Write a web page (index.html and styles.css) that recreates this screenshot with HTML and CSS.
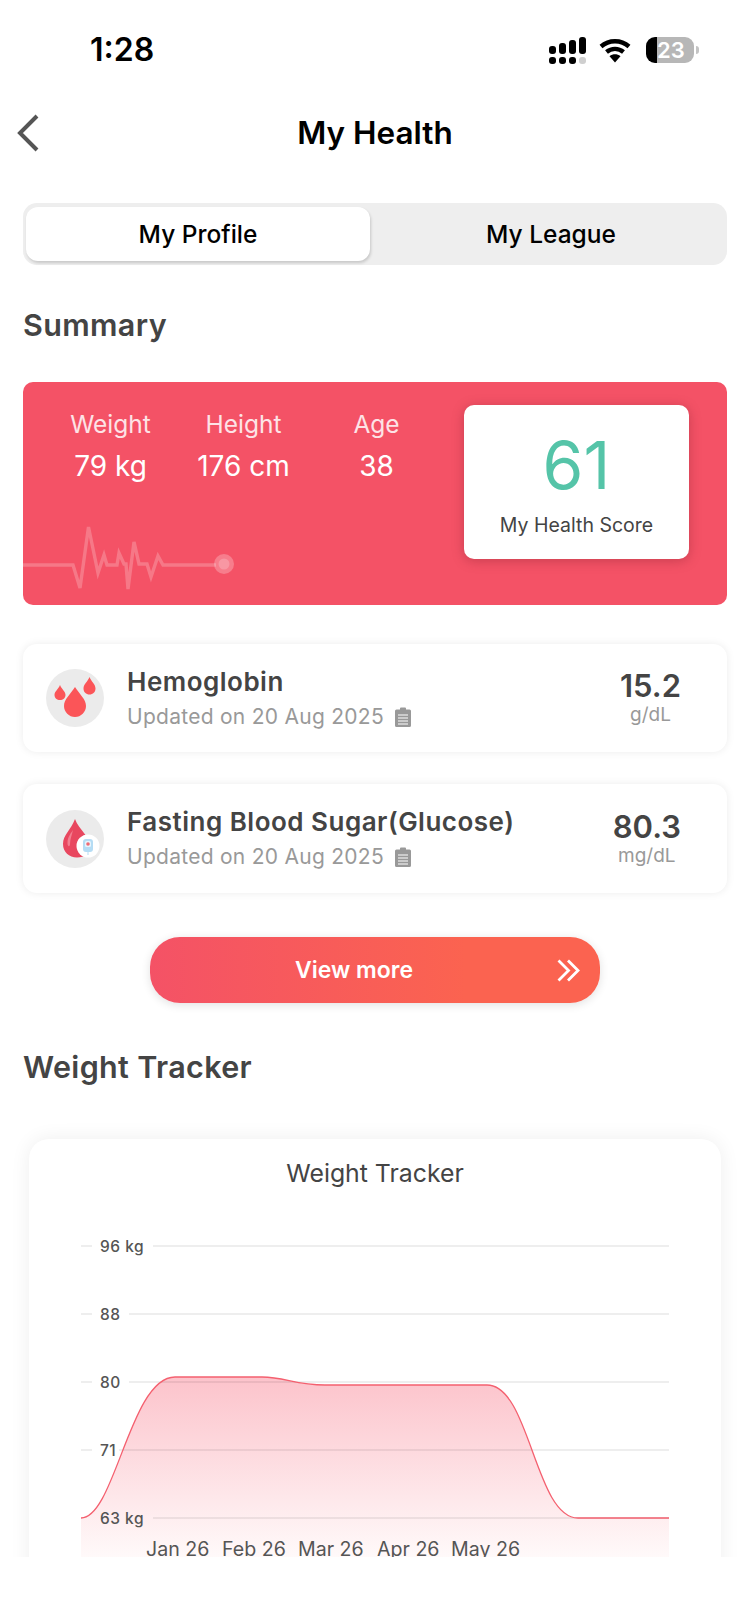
FILE: index.html
```html
<!DOCTYPE html>
<html>
  <head>
    <title>My Health</title>
    <meta charset="UTF-8" />
    <meta name="viewport" content="width=device-width, initial-scale=1" />
    <link rel="stylesheet" href="styles.css">
  </head>
  <body>
    <div class="page">
      <div class="status-bar">
        <div class="time">1:28</div>
        <div class="status-icons">
          <svg class="signal" width="38" height="28" viewBox="0 0 38 28">
            <rect x="0" y="9" width="7" height="8" rx="3"/>
            <rect x="10" y="6" width="7" height="11" rx="3"/>
            <rect x="20" y="3" width="7" height="14" rx="3"/>
            <rect x="30" y="0" width="7" height="17" rx="3"/>
            <rect x="0" y="20" width="7" height="7" rx="3"/>
            <rect x="10" y="20" width="7" height="7" rx="3"/>
            <rect x="20" y="20" width="7" height="7" rx="3"/>
            <rect x="30" y="20" width="7" height="7" rx="3" fill="#cfcfcf"/>
          </svg>
          <svg class="wifi" width="32" height="25" viewBox="0 0 32 25">
            <path d="M2 8.5C10 1.5 22 1.5 30 8.5" fill="none" stroke="#000" stroke-width="4.4"/>
            <path d="M7.5 14C12.5 9.8 19.5 9.8 24.5 14" fill="none" stroke="#000" stroke-width="4.4"/>
            <path d="M10.5 18.2C14 15.6 18 15.6 21.5 18.2L16 24.5Z"/>
          </svg>
          <div class="battery"><span>23</span></div>
          <div class="battery-nub"></div>
        </div>
      </div>

      <div class="nav">
        <svg class="back" width="24" height="38" viewBox="0 0 24 38">
          <path d="M21 2L4 19L21 36" fill="none" stroke="#555" stroke-width="4"/>
        </svg>
        <h1>My Health</h1>
      </div>

      <main>
        <div class="tabs">
          <div class="tab active">My Profile</div>
          <div class="tab">My League</div>
        </div>

        <h2 class="summary-title">Summary</h2>

        <div class="summary-card">
          <div class="stats">
            <div class="stat"><div class="stat-label">Weight</div><div class="stat-value">79 kg</div></div>
            <div class="stat"><div class="stat-label">Height</div><div class="stat-value">176 cm</div></div>
            <div class="stat"><div class="stat-label">Age</div><div class="stat-value">38</div></div>
          </div>
          <div class="score-box">
            <div class="score">61</div>
            <div class="score-label">My Health Score</div>
          </div>
          <svg class="ecg" width="220" height="80" viewBox="23 515 220 80">
            <path d="M23 565H73L80 588L88.5 527L98 573L104 555L107 565H117L119 553L124 564H126L128 589L134 542L139 564H147L151 577L158 556L163 565H216" fill="none" stroke="#fff" stroke-opacity="0.22" stroke-width="3.4"/>
            <circle cx="224" cy="564" r="10" fill="#fff" fill-opacity="0.25"/>
            <circle cx="224" cy="564" r="5.5" fill="#fff" fill-opacity="0.2"/>
          </svg>
        </div>

        <div class="lab-row first">
          <div class="lab-icon">
            <svg width="58" height="58" viewBox="46 669 58 58">
              <path d="M75 687C80 695 86 699 86 706C86 712 81 717 75 717C69 717 64 712 64 706C64 699 70 695 75 687Z" fill="#fb5558"/>
              <path d="M60 685C62 690 65.500 691 65.500 695C65.500 698 63 700 60 700C57 700 54.500 698 54.500 695C54.500 691 58 690 60 685Z" fill="#fb5558"/>
              <path d="M89.500 677C91.500 682 95.500 684 95.500 688.500C95.500 692 93 694.500 89.500 694.500C86 694.500 83.500 692 83.500 688.500C83.500 684 87.500 682 89.500 677Z" fill="#fb5558"/>
            </svg>
          </div>
          <div class="lab-text">
            <div class="lab-name">Hemoglobin</div>
            <div class="lab-date">
              Updated on 20 Aug 2025
              <svg class="clip" width="16" height="20" viewBox="0 0 16 20">
                <path d="M1.500 2.500H5V1.500Q5 0.500 6 0.500H10Q11 0.500 11 1.500V2.500H14.500Q16 2.500 16 4V18.500Q16 20 14.500 20H1.500Q0 20 0 18.500V4Q0 2.500 1.500 2.500Z" fill="#999"/>
                <path d="M3 8H13M3 11H13M3 14H13M3 17H13" stroke="#fff" stroke-width="1"/>
              </svg>
            </div>
          </div>
          <div class="lab-result">
            <div class="lab-value">15.2</div>
            <div class="lab-unit">g/dL</div>
          </div>
        </div>

        <div class="lab-row">
          <div class="lab-icon">
            <svg width="58" height="58" viewBox="46 810 58 58">
              <path d="M75 819C79 830 90 836 90 846C90 853 85 857.500 77 857.500C69 857.500 63 852 63 844C63 835 71 830 75 819Z" fill="#e8475f"/>
              <path d="M67.500 843C67.500 837 71 833 73 830C72 835 70 839 70 844C70 847 67.500 847 67.500 843Z" fill="#f27f90"/>
              <circle cx="88" cy="846" r="11.500" fill="#fff"/>
              <rect x="83" y="839" width="10" height="13" rx="3" fill="#b5dcf4"/>
              <rect x="85" y="841" width="6" height="6" rx="1.500" fill="#e6f4fc"/>
              <circle cx="88" cy="844" r="1.800" fill="#ef6a73"/>
              <rect x="87.500" y="852" width="1" height="3" fill="#b5dcf4"/>
            </svg>
          </div>
          <div class="lab-text">
            <div class="lab-name">Fasting Blood Sugar(Glucose)</div>
            <div class="lab-date">
              Updated on 20 Aug 2025
              <svg class="clip" width="16" height="20" viewBox="0 0 16 20">
                <path d="M1.500 2.500H5V1.500Q5 0.500 6 0.500H10Q11 0.500 11 1.500V2.500H14.500Q16 2.500 16 4V18.500Q16 20 14.500 20H1.500Q0 20 0 18.500V4Q0 2.500 1.500 2.500Z" fill="#999"/>
                <path d="M3 8H13M3 11H13M3 14H13M3 17H13" stroke="#fff" stroke-width="1"/>
              </svg>
            </div>
          </div>
          <div class="lab-result">
            <div class="lab-value">80.3</div>
            <div class="lab-unit">mg/dL</div>
          </div>
        </div>

        <div class="view-more">
          <span>View more</span>
          <svg class="chevrons" width="23" height="23" viewBox="0 0 23 23">
            <path d="M1.500 1.500L11.500 11.500L1.500 21.500M11 1.500L21 11.500L11 21.500" fill="none" stroke="#fff" stroke-width="2.800"/>
          </svg>
        </div>

        <h2 class="tracker-title">Weight Tracker</h2>

        <div class="chart-card">
          <div class="chart-title">Weight Tracker</div>
          <!-- viewBox uses the same numbers as the page so the points are easy to read off -->
          <svg class="chart" width="692" height="340" viewBox="29 1220 692 340">
            <defs>
              <linearGradient id="areaFill" gradientUnits="userSpaceOnUse" x1="0" y1="1377" x2="0" y2="1562">
                <stop offset="0" stop-color="#fcc3cb"/>
                <stop offset="1" stop-color="#fffbfb"/>
              </linearGradient>
            </defs>

            <path d="M81 1518C115 1518 130 1377 175 1377L262 1377C285 1377 295 1385 325 1385L487 1385C530 1385 535 1518 578 1518L669 1518V1560H81Z" fill="url(#areaFill)"/>

            <g class="grid">
              <path d="M81 1246H92M153 1246H669"/>
              <path d="M81 1314H92M129 1314H669"/>
              <path d="M81 1382H92M129 1382H669"/>
              <path d="M81 1450H92M119 1450H669"/>
              <path d="M153 1518H669"/>
            </g>

            <path d="M81 1518C115 1518 130 1377 175 1377L262 1377C285 1377 295 1385 325 1385L487 1385C530 1385 535 1518 578 1518L669 1518" fill="none" stroke="#f4606f" stroke-width="1.300"/>

            <g class="y-labels">
              <text x="100" y="1252">96 kg</text>
              <text x="100" y="1320">88</text>
              <text x="100" y="1388">80</text>
              <text x="100" y="1456">71</text>
              <text x="100" y="1524">63 kg</text>
            </g>
            <g class="x-labels">
              <text x="146" y="1556">Jan 26</text>
              <text x="222" y="1556">Feb 26</text>
              <text x="298" y="1556">Mar 26</text>
              <text x="377" y="1556">Apr 26</text>
              <text x="451" y="1556">May 26</text>
            </g>
          </svg>
        </div>
      </main>
    </div>
  </body>
</html>
```

FILE: styles.css
```css
html,
body {
  margin: 0;
  padding: 0;
  background-color: #ffffff;
  font-family: Inter, "Liberation Sans", sans-serif;
}

/* the capture stops the page content above the bottom of the window */
.page {
  height: 1557px;
  overflow: hidden;
}

/* status bar */
.status-bar {
  height: 100px;
  display: flex;
  justify-content: space-between;
  box-sizing: border-box;
  padding: 30px 51px 0 90px;
}
.time {
  font-size: 32px;
  line-height: 40px;
  font-weight: 600;
  color: #000;
}
.status-icons {
  display: flex;
  align-items: flex-start;
  padding-top: 7px;
}
.wifi {
  margin-left: 12px;
  margin-top: 1px;
}
.battery {
  width: 48px;
  height: 26px;
  margin-left: 15px;
  box-sizing: border-box;
  padding: 0 10px 0 11px;
  border-radius: 9px;
  background: linear-gradient(90deg, #000 0, #000 11px, #b7b7b7 11px);
  color: #fff;
  font-size: 22px;
  line-height: 26px;
  font-weight: 600;
  text-align: center;
}
.battery-nub {
  width: 3px;
  height: 8px;
  margin: 9px 0 0 2px;
  border-radius: 0 3px 3px 0;
  background-color: #c4c4c4;
}

/* nav */
.nav {
  height: 66px;
  display: flex;
  align-items: center;
  justify-content: center;
  position: relative;
}
.nav h1 {
  margin: -2px 0 0;
  font-size: 31.500px;
  font-weight: 600;
  color: #000;
}
.back {
  position: absolute;
  left: 16px;
  top: 14px;
}

main {
  padding: 0 23px;
}

/* tabs */
.tabs {
  display: flex;
  height: 62px;
  margin-top: 37px;
  box-sizing: border-box;
  padding: 4px 3px;
  border-radius: 14px;
  background-color: #eeeeee;
}
.tab {
  flex: 1;
  display: flex;
  align-items: center;
  justify-content: center;
  padding-left: 8px;
  font-size: 24.500px;
  font-weight: 500;
  color: #000;
  border-radius: 12px;
}
.tab.active {
  flex: 0 0 344px;
  padding-left: 0;
  background-color: #fff;
  box-shadow: 1px 2px 3px rgba(0, 0, 0, 0.16);
}

h2 {
  margin: 0;
  font-size: 30.500px;
  line-height: 40px;
  font-weight: 600;
  letter-spacing: 0.35px;
  color: #444;
}
.summary-title {
  margin-top: 40px;
}
.tracker-title {
  margin-top: 44px;
}

/* red summary card */
.summary-card {
  display: flex;
  position: relative;
  height: 223px;
  margin-top: 37px;
  box-sizing: border-box;
  padding: 26px 36px 0 21px;
  border-radius: 10px;
  background-color: #f45266;
}
.stats {
  display: flex;
  width: 399px;
  margin-right: 21px;
  color: #fff;
  text-align: center;
}
.stat {
  flex: 1;
}
.stat-label {
  font-size: 24.500px;
  line-height: 32px;
  color: #fde3e6;
}
.stat-value {
  margin-top: 10px;
  font-size: 28px;
  line-height: 32px;
}
.score-box {
  width: 225px;
  height: 154px;
  margin-top: -3px;
  border-radius: 10px;
  background-color: #fff;
  text-align: center;
  box-shadow: 0 2px 12px rgba(120, 30, 40, 0.35);
}
.score {
  margin-top: 27px;
  font-size: 66px;
  line-height: 66px;
  color: #55c4a8;
}
.score-label {
  margin-top: 14px;
  font-size: 19.500px;
  line-height: 26px;
  color: #444;
}
.ecg {
  position: absolute;
  left: 0;
  bottom: 10px;
}

/* lab result rows */
.lab-row {
  display: flex;
  align-items: center;
  height: 109px;
  margin-top: 32px;
  box-sizing: border-box;
  padding: 0 46px 0 23px;
  border-radius: 14px;
  background-color: #fff;
  box-shadow: 0 0 8px rgba(0, 0, 0, 0.08);
}
.lab-row.first {
  height: 108px;
  margin-top: 39px;
}
.lab-icon {
  width: 58px;
  height: 58px;
  border-radius: 50%;
  background-color: #ebebeb;
}
.lab-icon svg {
  display: block;
}
.lab-text {
  flex: 1;
  margin-left: 23px;
}
.lab-name {
  font-size: 26px;
  line-height: 32px;
  font-weight: 600;
  letter-spacing: 0.5px;
  color: #444;
}
.lab-date {
  display: flex;
  align-items: center;
  margin-top: 5px;
  font-size: 21px;
  line-height: 28px;
  letter-spacing: 0.27px;
  color: #999;
}
.clip {
  margin-left: 11px;
}
.lab-result {
  display: flex;
  flex-direction: column;
  align-items: center;
}
.lab-value {
  font-size: 31px;
  line-height: 34px;
  font-weight: 600;
  color: #444;
}
.lab-unit {
  font-size: 19px;
  line-height: 24px;
  color: #999;
}

/* button */
.view-more {
  display: flex;
  align-items: center;
  justify-content: center;
  position: relative;
  width: 450px;
  height: 66px;
  margin: 44px auto 0;
  box-sizing: border-box;
  padding-right: 42px;
  border-radius: 30px;
  background: linear-gradient(90deg, #f45266, #fb6350 70%);
  color: #fff;
  font-size: 23px;
  font-weight: 600;
  box-shadow: 0 2px 10px rgba(0, 0, 0, 0.12);
}
.chevrons {
  position: absolute;
  right: 20px;
  top: 22px;
}

/* chart */
.chart-card {
  width: 692px;
  height: 480px;
  margin: 52px 0 0 6px;
  border-radius: 20px;
  background-color: #fff;
  box-shadow: 0 0 20px rgba(0, 0, 0, 0.07);
}
.chart-title {
  height: 81px;
  padding-top: 18px;
  box-sizing: border-box;
  text-align: center;
  font-size: 24.800px;
  line-height: 32px;
  color: #444;
}
.chart {
  display: block;
}
.grid path {
  fill: none;
  stroke: rgba(0, 0, 0, 0.09);
  stroke-width: 1.500;
}
.y-labels text {
  font-size: 15.500px;
  font-weight: 500;
  letter-spacing: 0.5px;
  fill: #555;
}
.x-labels text {
  font-size: 19.600px;
  fill: #555;
}
```
